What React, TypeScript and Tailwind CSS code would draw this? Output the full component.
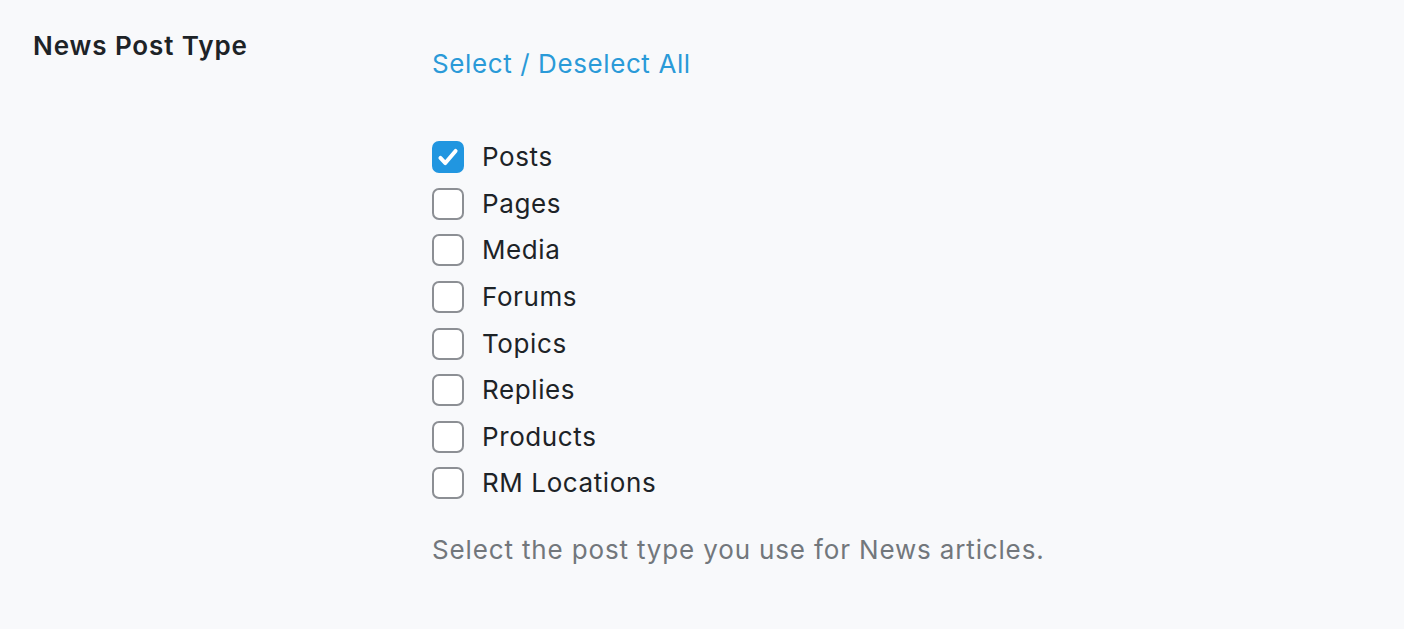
import React, { useState } from 'react';

const postTypes = ['Posts', 'Pages', 'Media', 'Forums', 'Topics', 'Replies', 'Products', 'RM Locations'];

const Checkbox = ({ checked, onChange }: { checked: boolean; onChange: () => void }) => (
  <button
    type="button"
    onClick={onChange}
    className={`flex h-[32px] w-[32px] shrink-0 items-center justify-center rounded-[7px] border-2 ${
      checked ? 'border-[#2196e0] bg-[#2196e0]' : 'border-[#8c8f94] bg-white'
    }`}
  >
    {checked && (
      <svg viewBox="0 0 24 24" className="h-[28px] w-[28px]" fill="none" stroke="white" strokeWidth={3.4} strokeLinecap="round" strokeLinejoin="round">
        <path d="M5.5 12.8l4.2 4.4L18.5 6.8" />
      </svg>
    )}
  </button>
);

const App = () => {
  const [selected, setSelected] = useState<string[]>(['Posts']);

  const toggle = (name: string) =>
    setSelected((s) => (s.includes(name) ? s.filter((x) => x !== name) : [...s, name]));

  const toggleAll = () => setSelected((s) => (s.length === postTypes.length ? [] : [...postTypes]));

  return (
    <div className="min-h-[629px] w-full bg-[#f8f9fb] font-['Inter',sans-serif] text-[#1d2327]">
      <div className="flex pt-[30px]">
        {/* Label */}
        <div className="w-[432px] shrink-0 pl-[33px]">
          <h2 className="text-[26px] font-semibold leading-[32px] tracking-[0.9px]">News Post Type</h2>
        </div>

        {/* Field */}
        <div className="flex flex-col">
          <a href="#" onClick={(e) => { e.preventDefault(); toggleAll(); }} className="mt-[18px] text-[26px] leading-[32px] tracking-[0.6px] text-[#2a9ad8]">
            Select / Deselect All
          </a>

          <ul className="mt-[54px] flex flex-col">
            {postTypes.map((name) => (
              <li key={name} className="flex h-[46.6px] items-center gap-[18px]">
                <Checkbox checked={selected.includes(name)} onChange={() => toggle(name)} />
                <span className="text-[26px] leading-[32px] tracking-[0.6px]">{name}</span>
              </li>
            ))}
          </ul>

          <p className="mt-[27px] text-[26px] leading-[32px] tracking-[0.85px] text-[#72777c]">
            Select the post type you use for News articles.
          </p>
        </div>
      </div>
    </div>
  );
};

export default App;
